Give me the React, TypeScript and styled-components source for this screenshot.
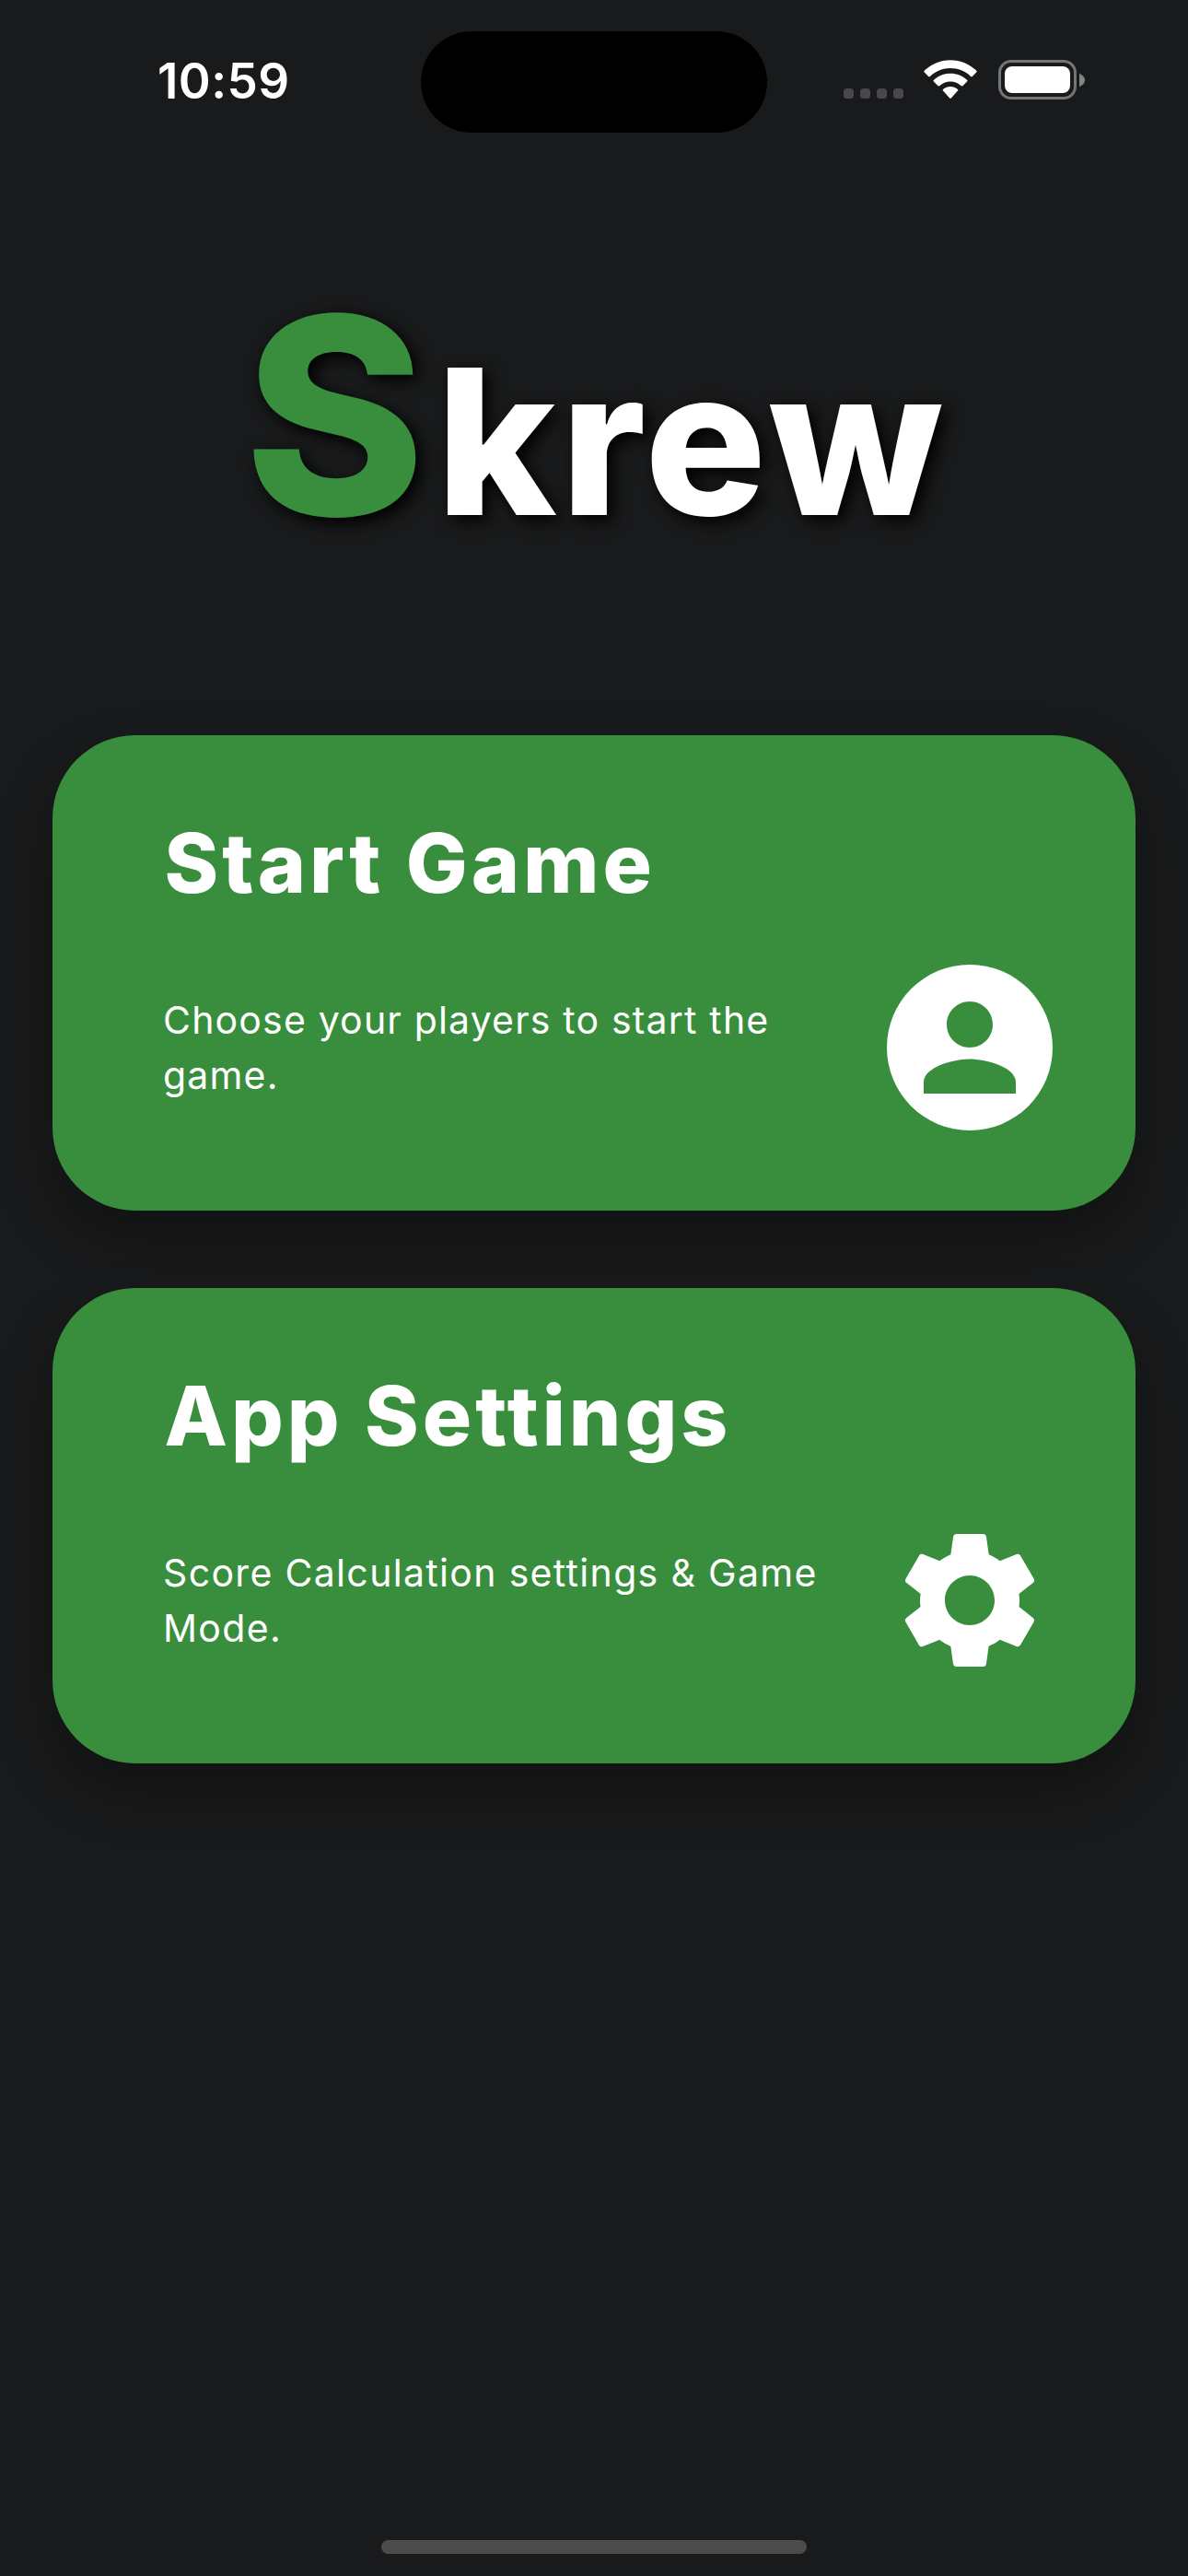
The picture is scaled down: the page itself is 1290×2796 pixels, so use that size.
import React from "react";
import styled, { createGlobalStyle } from "styled-components";
import { MdPerson, MdSettings } from "react-icons/md";

const GlobalStyle = createGlobalStyle`
  *, *::before, *::after { box-sizing: border-box; }
  body {
    margin: 0;
    background: #191a1b;
    color: #fff;
    font-family: Inter, "Liberation Sans", sans-serif;
  }
`;

const Screen = styled.div`
  display: flex;
  flex-direction: column;
  width: 1290px;
  height: 2796px;
  overflow: hidden;
  background: #191a1b;
`;

const StatusBar = styled.header`
  display: grid;
  grid-template-columns: 457px 376px 457px;
  height: 177px;
  flex: none;
`;

const Clock = styled.time`
  padding: 56px 0 0 171px;
  font-size: 53px;
  line-height: 64px;
  font-weight: 600;
  letter-spacing: 0.4px;
  white-space: nowrap;
`;

const Island = styled.div`
  height: 110px;
  margin-top: 34px;
  border-radius: 55px;
  background: #000;
`;

const StatusIcons = styled.div`
  display: flex;
  align-items: flex-start;
  padding: 65px 0 0 83px;
`;

const Cellular = styled.div`
  display: flex;
  gap: 7px;
  margin: 31px 0 0;
`;

const CellDot = styled.span`
  width: 11px;
  height: 11px;
  border-radius: 3.5px;
  background: #48484a;
`;

const WifiIcon = styled.svg`
  display: block;
  width: 58px;
  height: 43px;
  margin-left: 22px;
`;

const Battery = styled.div`
  display: flex;
  align-items: center;
  gap: 3px;
  margin-left: 23px;
`;

const BatteryShell = styled.div`
  width: 85px;
  height: 43px;
  padding: 4px;
  border: 3px solid #747576;
  border-radius: 14px;
`;

const BatteryLevel = styled.div`
  height: 29px;
  border-radius: 8px;
  background: #fff;
`;

const BatteryTip = styled.svg`
  display: block;
  width: 6px;
  height: 14px;
`;

const Wordmark = styled.h1`
  display: flex;
  align-items: baseline;
  height: 621px;
  margin: 0;
  padding: 92px 0 0 265px;
  line-height: 363px;
  font-weight: 800;
  text-shadow: 6px 6px 18px #000;
  white-space: nowrap;
`;

const Initial = styled.span`
  color: #388e3c;
  font-size: 298px;
`;

const Rest = styled.span`
  margin-left: 12px;
  font-size: 220px;
  letter-spacing: 4.8px;
`;

const Menu = styled.main`
  display: flex;
  flex-direction: column;
  gap: 84px;
  padding: 0 57px;
`;

const Card = styled.section`
  display: flex;
  flex-direction: column;
  height: 516px;
  padding: 85px 72px 0 120px;
  border-radius: 90px;
  background: #388e3c;
  box-shadow: 0 30px 60px rgba(0, 0, 0, 0.3);
`;

const CardTitle = styled.h2`
  margin: 0;
  padding-left: 1.5px;
  font-size: 89px;
  line-height: 108px;
  font-weight: 800;
  letter-spacing: 4px;
  white-space: nowrap;
`;

const CardBody = styled.div`
  display: flex;
  justify-content: space-between;
  align-items: center;
  height: 216px;
  margin-top: 38px;
`;

const CardText = styled.p<{ $tracking: number }>`
  width: 730px;
  margin: 0;
  font-size: 41px;
  line-height: 60px;
  font-weight: 400;
  letter-spacing: ${({ $tracking }) => $tracking}px;
`;

const IconSlot = styled.div`
  display: flex;
  align-items: center;
  justify-content: center;
  width: 216px;
  height: 216px;
`;

const Avatar = styled.div`
  display: flex;
  align-items: center;
  justify-content: center;
  width: 180px;
  height: 180px;
  border-radius: 50%;
  background: #fff;
  color: #388e3c;
`;

const HomeArea = styled.footer`
  display: flex;
  justify-content: center;
  margin-top: auto;
  padding-bottom: 24px;
`;

const HomeIndicator = styled.div`
  width: 462px;
  height: 15px;
  border-radius: 8px;
  background: #4c4c4c;
`;

interface MenuCardProps {
  title: string;
  lines: [string, string];
  tracking: number;
  icon: React.ReactNode;
}

function MenuCard({ title, lines, tracking, icon }: MenuCardProps) {
  return (
    <Card>
      <CardTitle>{title}</CardTitle>
      <CardBody>
        <CardText $tracking={tracking}>
          {lines[0]}
          <br />
          {lines[1]}
        </CardText>
        <IconSlot>{icon}</IconSlot>
      </CardBody>
    </Card>
  );
}

function Wifi() {
  return (
    <WifiIcon viewBox="0 0 58 43" fill="#fff">
      <path d="M29 .2C39.800.2 50 4.600 57.200 11.600c.5.500.5 1.300 0 1.800l-4.400 4.500c-.5.500-1.200.5-1.700 0C45.200 12.300 37.400 9.100 29 9.100S12.800 12.300 6.900 17.900c-.5.500-1.200.5-1.700 0L.8 13.400c-.5-.5-.5-1.300 0-1.800C8 4.600 18.200.2 29 .2z" />
      <path d="M29 14.800c6.800 0 13.200 2.500 18.100 7 .5.500.5 1.200 0 1.700l-4.500 4.600c-.5.500-1.200.5-1.700.1C37.600 25.200 33.500 23.500 29 23.500s-8.600 1.700-11.900 4.700c-.5.400-1.200.4-1.700-.1l-4.500-4.600c-.5-.5-.5-1.200 0-1.700C15.800 17.300 22.200 14.800 29 14.800z" />
      <path d="M29 29c3 0 5.800 1 8 2.900.5.500.5 1.200 0 1.700l-7.200 8c-.4.500-1.200.5-1.600 0l-7.200-8c-.5-.5-.5-1.200 0-1.700 2.200-1.900 5-2.900 8-2.900z" />
    </WifiIcon>
  );
}

export default function App() {
  return (
    <Screen>
      <GlobalStyle />
      <StatusBar>
        <Clock>10:59</Clock>
        <Island />
        <StatusIcons>
          <Cellular>
            <CellDot />
            <CellDot />
            <CellDot />
            <CellDot />
          </Cellular>
          <Wifi />
          <Battery>
            <BatteryShell>
              <BatteryLevel />
            </BatteryShell>
            <BatteryTip viewBox="0 0 6 14" fill="#848586">
              <path d="M0 0c3.600 1.200 6 3.900 6 7s-2.400 5.800-6 7z" />
            </BatteryTip>
          </Battery>
        </StatusIcons>
      </StatusBar>
      <Wordmark>
        <Initial>S</Initial>
        <Rest>krew</Rest>
      </Wordmark>
      <Menu>
        <MenuCard
          title="Start Game"
          lines={["Choose your players to start the", "game."]}
          tracking={1.18}
          icon={
            <Avatar>
              <MdPerson size={150} />
            </Avatar>
          }
        />
        <MenuCard
          title="App Settings"
          lines={["Score Calculation settings & Game", "Mode."]}
          tracking={1.33}
          icon={<MdSettings size={180} />}
        />
      </Menu>
      <HomeArea>
        <HomeIndicator />
      </HomeArea>
    </Screen>
  );
}
